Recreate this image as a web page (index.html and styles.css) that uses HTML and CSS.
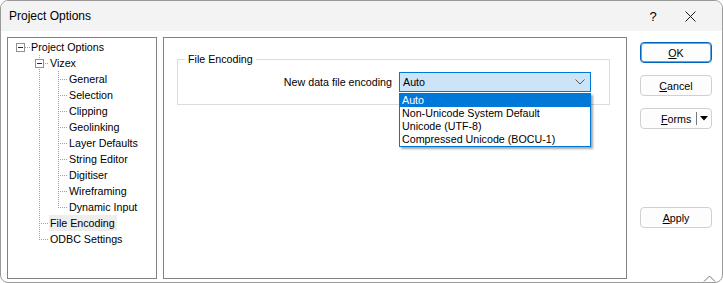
FILE: index.html
```html
<!DOCTYPE html>
<html lang="en">
<head>
  <meta charset="UTF-8">
  <title>Project Options</title>
  <link rel="stylesheet" href="styles.css">
</head>
<body>

  <div class="window">
    <div class="titlebar">
      <span class="title">Project Options</span>
      <span class="help">?</span>
      <span class="close">
        <svg width="11" height="11" viewBox="0 0 11 11"><path d="M0.5 0.5 L10.5 10.5 M10.5 0.5 L0.5 10.5" stroke="#1a1a1a" stroke-width="1" fill="none"/></svg>
      </span>
    </div>

    <div class="content">
      <div class="tree">
        <div class="row"><span class="cell c-h"><i class="box"></i></span><span class="label">Project Options</span></div>
        <div class="row"><span class="cell"></span><span class="cell c-t"><i class="box"></i></span><span class="label">Vizex</span></div>
        <div class="row"><span class="cell"></span><span class="cell c-v"></span><span class="cell c-t"></span><span class="label">General</span></div>
        <div class="row"><span class="cell"></span><span class="cell c-v"></span><span class="cell c-t"></span><span class="label">Selection</span></div>
        <div class="row"><span class="cell"></span><span class="cell c-v"></span><span class="cell c-t"></span><span class="label">Clipping</span></div>
        <div class="row"><span class="cell"></span><span class="cell c-v"></span><span class="cell c-t"></span><span class="label">Geolinking</span></div>
        <div class="row"><span class="cell"></span><span class="cell c-v"></span><span class="cell c-t"></span><span class="label">Layer Defaults</span></div>
        <div class="row"><span class="cell"></span><span class="cell c-v"></span><span class="cell c-t"></span><span class="label">String Editor</span></div>
        <div class="row"><span class="cell"></span><span class="cell c-v"></span><span class="cell c-t"></span><span class="label">Digitiser</span></div>
        <div class="row"><span class="cell"></span><span class="cell c-v"></span><span class="cell c-t"></span><span class="label">Wireframing</span></div>
        <div class="row"><span class="cell"></span><span class="cell c-v"></span><span class="cell c-l"></span><span class="label">Dynamic Input</span></div>
        <div class="row"><span class="cell"></span><span class="cell c-t"></span><span class="label selected">File Encoding</span></div>
        <div class="row"><span class="cell"></span><span class="cell c-l"></span><span class="label">ODBC Settings</span></div>
      </div>

      <div class="page">
        <fieldset class="group">
          <legend>File Encoding</legend>
          <div class="field">
            <span class="field-label">New data file encoding</span>
            <div class="combo">
              <span class="combo-value">Auto</span>
              <svg class="chevron" width="10" height="6" viewBox="0 0 10 6"><polyline points="0.5,0.5 5,5 9.5,0.5" stroke="#5a5a5a" stroke-width="1" fill="none"/></svg>
              <ul class="dropdown">
                <li class="active">Auto</li>
                <li>Non-Unicode System Default</li>
                <li>Unicode (UTF-8)</li>
                <li>Compressed Unicode (BOCU-1)</li>
              </ul>
            </div>
          </div>
        </fieldset>
      </div>

      <div class="buttons">
        <button class="btn default"><u>O</u>K</button>
        <button class="btn"><u>C</u>ancel</button>
        <button class="btn split">
          <span class="split-text"><u>F</u>orms</span>
          <span class="split-sep"></span>
          <svg class="split-arrow" width="8" height="5" viewBox="0 0 8 5"><polygon points="0,0 8,0 4,4.5" fill="#000"/></svg>
        </button>
        <button class="btn apply"><u>A</u>pply</button>
      </div>
    </div>

    <svg class="grip" width="14" height="8" viewBox="0 0 14 8"><polyline points="1,7.5 6.5,2 12,7.5" stroke="#777" stroke-width="1" fill="none"/></svg>
  </div>

</body>
</html>
```

FILE: styles.css
```css
  html, body {
    margin: 0;
    background-color: #ffffff;
  }
  body {
    font-family: 'Liberation Sans', Arial, sans-serif;
    font-size: 10.7px;
    color: #000;
  }

  .window {
    position: relative;
    width: 723px;
    height: 283px;
    box-sizing: border-box;
    border: 1px solid #9a9a9a;
    border-radius: 8px;
    overflow: hidden;
    background: #ffffff;
    display: flex;
    flex-direction: column;
  }

  /* barre de titre */
  .titlebar {
    height: 30px;
    flex: none;
    display: flex;
    align-items: center;
    background-color: #f3f3f3;
    padding-left: 8px;
  }
  .title {
    flex: 1;
    font-size: 12px;
  }
  .help {
    width: 20px;
    text-align: center;
    font-size: 13px;
    margin-right: 22px;
  }
  .close {
    width: 11px;
    height: 11px;
    margin-right: 26px;
    display: flex;
  }

  .content {
    flex: 1;
    display: flex;
    padding: 6px 0 3px 6px;
  }

  /* arbre */
  .tree {
    width: 150px;
    flex: none;
    box-sizing: border-box;
    border: 1px solid #828282;
    padding: 1px 0 0 3px;
  }
  .row {
    display: flex;
    height: 16px;
    line-height: 16px;
  }
  .cell {
    width: 19px;
    height: 16px;
    flex: none;
    display: flex;
    align-items: center;
  }
  .c-h {
    background: repeating-linear-gradient(to right, #a0a0a0 0 1px, transparent 1px 2px) 10px 8px / 9px 1px no-repeat;
  }
  .c-v {
    background: repeating-linear-gradient(to bottom, #a0a0a0 0 1px, transparent 1px 2px) 9px 0 / 1px 16px no-repeat;
  }
  .c-t {
    background:
      repeating-linear-gradient(to bottom, #a0a0a0 0 1px, transparent 1px 2px) 9px 0 / 1px 16px no-repeat,
      repeating-linear-gradient(to right, #a0a0a0 0 1px, transparent 1px 2px) 11px 8px / 8px 1px no-repeat;
  }
  .c-l {
    background:
      repeating-linear-gradient(to bottom, #a0a0a0 0 1px, transparent 1px 2px) 9px 0 / 1px 9px no-repeat,
      repeating-linear-gradient(to right, #a0a0a0 0 1px, transparent 1px 2px) 11px 8px / 8px 1px no-repeat;
  }
  .box {
    width: 9px;
    height: 9px;
    margin-left: 5px;
    margin-top: 1px;
    box-sizing: border-box;
    border: 1px solid #919191;
    background: linear-gradient(#1d2a44, #1d2a44) center / 5px 1px no-repeat, #ffffff;
  }
  .label {
    padding: 0 2px 0 1px;
    white-space: nowrap;
    height: 16px;
  }
  .label.selected {
    background-color: #eeeeee;
  }

  /* page de droite */
  .page {
    width: 464px;
    flex: none;
    box-sizing: border-box;
    border: 1px solid #828282;
    margin-left: 6px;
  }
  .group {
    margin: 13px 16px 0 13px;
    padding: 0 0 12px 0;
    border: 1px solid #dcdcdc;
    min-width: 0;
  }
  .group legend {
    margin-left: 7px;
    padding: 0 3px;
    line-height: 16px;
  }
  .field {
    display: flex;
    justify-content: flex-end;
    align-items: center;
    margin-top: 5px;
    padding-right: 18px;
  }
  .field-label {
    margin-right: 7px;
  }
  .combo {
    position: relative;
    width: 192px;
    height: 20px;
    box-sizing: border-box;
    border: 1px solid #0078d7;
    background-color: #cce4f7;
    display: flex;
    align-items: center;
    padding-left: 3px;
  }
  .combo-value {
    flex: 1;
  }
  .chevron {
    margin-right: 5px;
  }
  .dropdown {
    position: absolute;
    top: 20px;
    left: -1px;
    width: 192px;
    box-sizing: border-box;
    margin: 0;
    padding: 0;
    list-style: none;
    border: 1px solid #0078d7;
    background: #ffffff;
    box-shadow: 2px 2px 2px rgba(0, 0, 0, 0.35);
    z-index: 10;
  }
  .dropdown li {
    height: 13px;
    line-height: 13px;
    padding-left: 2px;
    white-space: nowrap;
  }
  .dropdown li.active {
    background-color: #0078d7;
    color: #ffffff;
  }

  /* boutons */
  .buttons {
    display: flex;
    flex-direction: column;
    padding: 5px 0 0 13px;
  }
  .btn {
    width: 72px;
    height: 21px;
    box-sizing: border-box;
    margin: 0 0 12px 0;
    padding: 0;
    font-family: inherit;
    font-size: inherit;
    color: #000;
    background-color: #fdfdfd;
    border: 1px solid #d0d0d0;
    border-radius: 4px;
  }
  .btn.default {
    border: 1px solid #0067c0;
    box-shadow: inset 0 0 0 1px #66a3dd;
  }
  .btn.split {
    display: flex;
    align-items: center;
    padding-left: 20px;
  }
  .split-text {
    flex: 1;
    text-align: left;
  }
  .split-sep {
    width: 1px;
    height: 13px;
    background-color: #7a7a7a;
    margin-right: 3px;
  }
  .split-arrow {
    margin-right: 3px;
  }
  .btn.apply {
    margin-top: 66px;
  }

  .grip {
    position: absolute;
    right: 5px;
    bottom: 0;
  }
```
